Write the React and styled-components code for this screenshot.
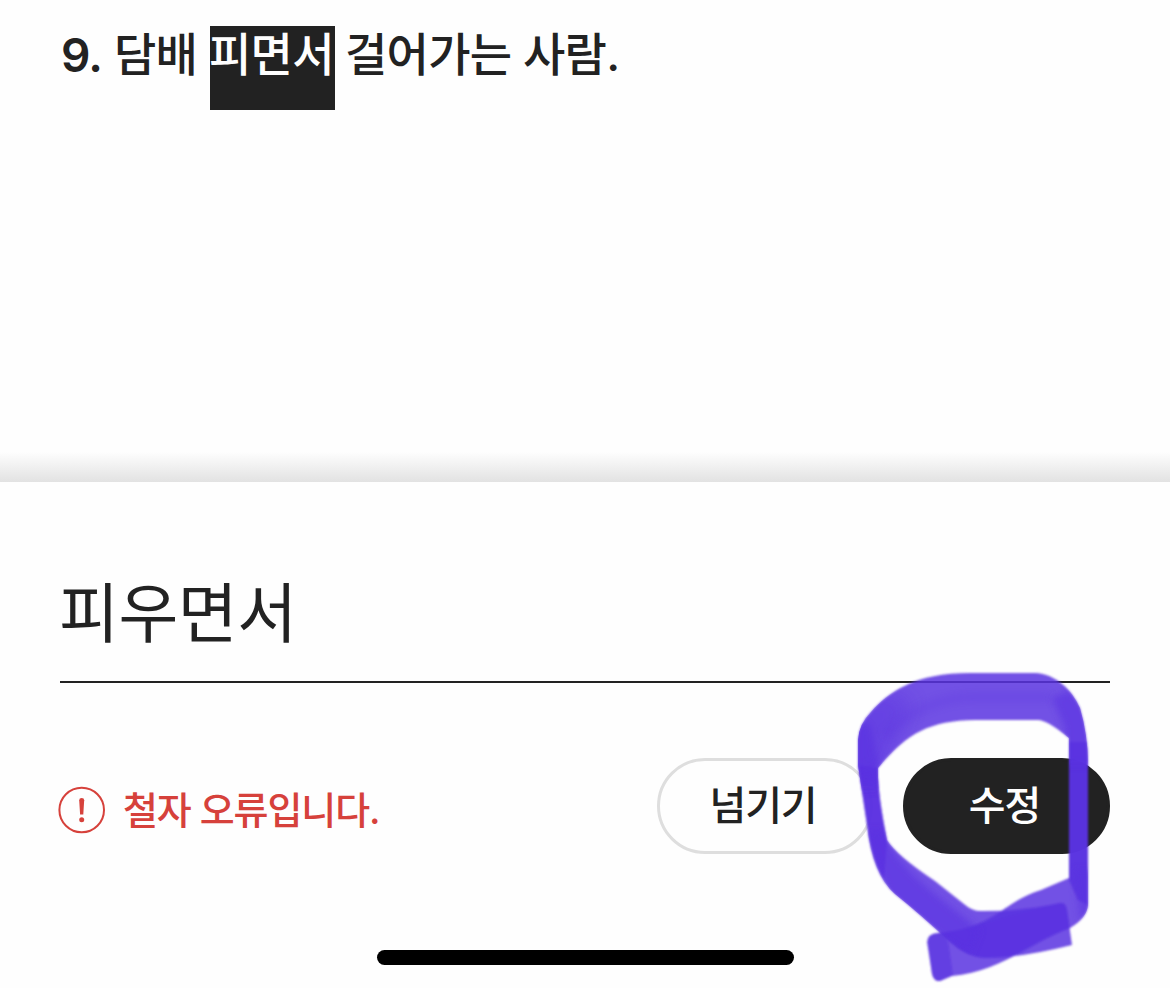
import React from "react";
import styled, { createGlobalStyle } from "styled-components";

const GlobalStyle = createGlobalStyle`
  * { box-sizing: border-box; }
  body { margin: 0; background: #fefefe; }
`;

const Screen = styled.main`
  position: relative;
  display: flex;
  flex-direction: column;
  width: 1170px;
  height: 988px;
  overflow: hidden;
  background: #fefefe;
  color: #222;
  font-family: Inter, "Noto Sans CJK KR", sans-serif;
`;

const Passage = styled.section`
  flex: 0 0 482px;
  padding: 26px 60px 0;
  background: linear-gradient(to bottom, rgba(226, 226, 226, 0), #e2e2e2) bottom / 100% 30px no-repeat;
`;

const Sentence = styled.p`
  display: flex;
  margin: 0;
  height: 84px;
  font-size: 46px;
  font-weight: 500;
  line-height: 56px;
  letter-spacing: -0.7px;
  white-space: pre;
`;

const Word = styled.span`
  flex: 0 0 ${(p) => p.$width}px;
`;

const Numeral = styled(Word)`
  font-size: 46px;
  font-weight: 600;
  letter-spacing: -0.8px;
  line-height: 58px;
  padding-left: 1px;
`;

const Highlight = styled.mark`
  flex: 0 0 125px;
  margin-right: 10px;
  height: 84px;
  background: #222;
  color: #fefefe;
  text-indent: -1px;
`;

const Editor = styled.section`
  display: flex;
  flex-direction: column;
  flex: 1;
  padding: 78px 60px 0;
`;

const Replacement = styled.div`
  height: 123px;
  border-bottom: 2px solid #222;
  font-size: 65px;
  font-weight: 400;
  line-height: 108px;
  letter-spacing: -0.4px;
  text-indent: -1px;
`;

const Actions = styled.div`
  display: flex;
  align-items: center;
  height: 96px;
  margin-top: 75px;
`;

const Notice = styled.div`
  display: flex;
  align-items: center;
  flex: 1;
  margin-left: -2px;
  padding-top: 8px;
  color: #d6413b;
  font-size: 38px;
  font-weight: 500;
  letter-spacing: -1.1px;
  line-height: 48px;
`;

const AlertIcon = styled.svg`
  width: 48px;
  height: 48px;
  margin-right: 17px;
`;

const PillButton = styled.button`
  width: ${(p) => p.$width}px;
  height: 96px;
  margin-left: ${(p) => p.$gap || 0}px;
  padding: 0 4px 0 0;
  border: 3px solid ${(p) => (p.$solid ? "#222" : "#dedede")};
  border-radius: 48px;
  background: ${(p) => (p.$solid ? "#222" : "transparent")};
  color: ${(p) => (p.$solid ? "#fefefe" : "#222")};
  font: 500 40px/56px Inter, "Noto Sans CJK KR", sans-serif;
  letter-spacing: -1.1px;
`;

const HomeIndicator = styled.div`
  align-self: center;
  width: 417px;
  height: 15px;
  margin-top: 96px;
  border-radius: 8px;
  background: #000;
`;

const Marker = styled.svg`
  position: absolute;
  inset: 0;
  width: 1170px;
  height: 988px;
  pointer-events: none;
`;

const LOOP =
  "M858 740Q859 724 871 712C890 691 915 673 970 673H1035C1056 674 1072 690 1080 708Q1088 735 1088 765V905Q1087 918 1070 928L1072 945Q1020 958 985 958Q966 957 950 942Q920 914 895 894Q872 874 867 825L858 765Z" +
  "M878 768Q877 790 887 840Q896 855 935 881L964 904Q973 912 983 911Q1005 911 1041 890L1069 878V738Q1046 719 1037 720H975C930 721 908 732 878 768Z";

function MarkerStroke() {
  return (
    <Marker viewBox="0 0 1170 988" fill="#5a32e1" aria-hidden="true">
      <defs>
        <filter id="soft" x="-10%" y="-10%" width="120%" height="120%">
          <feGaussianBlur stdDeviation="1.2" />
        </filter>
        <filter id="feather" filterUnits="userSpaceOnUse" x="820" y="640" width="300" height="348">
          <feGaussianBlur stdDeviation="3.5" />
        </filter>
        <filter id="haze" filterUnits="userSpaceOnUse" x="820" y="640" width="300" height="348">
          <feGaussianBlur stdDeviation="9" />
        </filter>
        <clipPath id="loop">
          <path d={LOOP} clipRule="evenodd" />
        </clipPath>
      </defs>
      <g filter="url(#soft)">
        <path
          opacity=".85"
          d="M858 740Q859 724 871 712C890 691 915 673 970 673H1035C1056 674 1072 690 1080 708Q1088 735 1088 765V830H1069V738Q1046 719 1037 720H975C930 721 908 732 878 768Q877 790 887 840Q896 855 935 881L964 904Q973 912 983 911Q1025 911 1060 903Q1066 902 1067 910L1072 945Q1020 958 985 958Q966 957 950 942Q920 914 895 894Q872 874 867 825L858 765Z"
        />
        <path
          opacity=".85"
          d="M1069 830H1088V905Q1087 918 1070 928C1030 943 1000 972 952 976L940 981Q934 982 932 974L927 942Q927 934 938 933C997 927 1000 903 1041 890L1069 878Z"
        />
        <path d="M858 765L878 768Q877 790 887 840L884 880Q871 858 867 825Z" opacity=".75" />
        <path d="M1069 742H1087L1088 765V905L1078 900L1069 880Z" opacity=".85" />
        <path d="M983 924Q1025 911 1060 903Q1066 902 1067 910L1070 928Q1038 940 1010 957L985 958Q966 957 943 933Q966 930 983 924Z" opacity=".5" />
        <path d="M928 942Q928 933 938 933Q947 933 949 947L953 975L940 981Q934 982 932 974Z" opacity=".6" />
      </g>
      <g clipPath="url(#loop)">
        <path d="M850 725Q862 720 870 724L881 775L880 790H850Z" filter="url(#feather)" opacity=".65" />
        <path d="M850 700L880 690L912 700L880 780H850Z" filter="url(#haze)" opacity=".45" />
        <path d="M1052 698L1070 690L1095 720V765H1065V728Z" filter="url(#feather)" opacity=".6" />
        <path d="M866 830H884Q892 860 940 898L980 930L970 955L890 900Z" filter="url(#feather)" opacity=".6" />
        <path d="M1074 870H1095V915L1080 920Z" filter="url(#feather)" opacity=".5" />
        <path d="M885 735Q925 697 975 697H1050" fill="none" stroke="#5a32e1" strokeWidth="10" filter="url(#feather)" opacity=".2" />
      </g>
    </Marker>
  );
}

export default function App() {
  return (
    <>
      <GlobalStyle />
      <Screen>
        <Passage>
          <Sentence>
            <Numeral $width={54}>9.</Numeral>
            <Word $width={96}>담배</Word>
            <Highlight>피면서</Highlight>
            <Word $width={178}>걸어가는</Word>
            <Word $width={110}>사람.</Word>
          </Sentence>
        </Passage>
        <Editor>
          <Replacement>피우면서</Replacement>
          <Actions>
            <Notice>
              <AlertIcon viewBox="0 0 48 48" fill="none" stroke="currentColor">
                <circle cx="23.7" cy="24" r="22.3" strokeWidth="2" />
                <path d="M21.2 14.2Q21.2 12 23.7 12T26.2 14.2L25.3 28.5H22.1Z" fill="currentColor" stroke="none" />
                <circle cx="23.7" cy="33.8" r="2.5" fill="currentColor" stroke="none" />
              </AlertIcon>
              철자 오류입니다.
            </Notice>
            <PillButton $width={216}>넘기기</PillButton>
            <PillButton $width={207} $gap={30} $solid>수정</PillButton>
          </Actions>
          <HomeIndicator />
        </Editor>
        <MarkerStroke />
      </Screen>
    </>
  );
}
